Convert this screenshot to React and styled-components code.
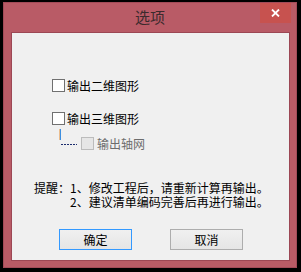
import styled, { createGlobalStyle } from "styled-components";

const GlobalStyle = createGlobalStyle`
  html, body {
    margin: 0;
    padding: 0;
    background: #000;
  }
  body {
    font-family: "Noto Sans CJK SC", "Liberation Sans", sans-serif;
  }
`;

const Screen = styled.div`
  width: 301px;
  height: 272px;
  padding: 2px 0 0 3px;
  box-sizing: border-box;
`;

const Window = styled.div`
  width: 294px;
  height: 266px;
  box-sizing: border-box;
  display: flex;
  flex-direction: column;
  background: #b95b66;
  border: 1px solid #a34b58;
`;

const TitleBar = styled.div`
  height: 29px;
  display: grid;
  grid-template-columns: 1fr auto 1fr;
  align-items: center;
`;

const Title = styled.div`
  grid-column: 2;
  font-size: 15px;
  line-height: 15px;
  color: #3b2a2d;
  padding-bottom: 2px;
`;

const CloseButton = styled.button`
  grid-column: 3;
  justify-self: end;
  align-self: start;
  width: 31px;
  height: 20px;
  margin: 0 5px 0 0;
  padding: 0;
  border: none;
  background: #c7524f;
  display: flex;
  align-items: center;
  justify-content: center;
`;

const Client = styled.div`
  flex: 1;
  margin: 0 6px 6px 7px;
  background: #f0f0f0;
  border: 1px solid #9c4754;
  font-size: 12px;
  line-height: 13px;
  color: #000;
  padding: 45px 0 0 40px;
  box-sizing: border-box;
`;

const CheckRow = styled.div`
  display: flex;
  align-items: center;
  gap: 2px;
  height: 14px;
  margin-bottom: ${(p) => p.$gap || 0}px;
`;

const Box = styled.span`
  width: 13px;
  height: 13px;
  box-sizing: border-box;
  border: 1px solid ${(p) => (p.$disabled ? "#bcbcbc" : "#707070")};
  background: ${(p) => (p.$disabled ? "#e6e6e6" : "#fff")};
  flex: none;
`;

const Label = styled.span`
  color: ${(p) => (p.$disabled ? "#6d6d6d" : "#000")};
  white-space: nowrap;
`;

const SubRow = styled.div`
  display: flex;
  align-items: flex-end;
  height: 22px;
  margin: 3px 0 0 7px;
  gap: 3px;
`;

const Connector = styled.svg`
  flex: none;
  margin-right: 1px;
  align-self: flex-start;
`;

const Notice = styled.div`
  display: grid;
  grid-template-columns: 36px auto;
  margin: 31px 0 0 -18px;
  line-height: 14px;
  white-space: nowrap;
`;

const ButtonRow = styled.div`
  display: flex;
  gap: 38px;
  margin: 20px 0 0 7px;
`;

const Button = styled.button`
  width: 73px;
  height: 21px;
  padding: 0;
  font-family: "Noto Sans CJK SC", sans-serif;
  font-size: 12px;
  line-height: 12px;
  color: #000;
  border: 1px solid ${(p) => (p.$primary ? "#3399ff" : "#adadad")};
  background: linear-gradient(#f0f0f0, #e5e5e5);
`;

export default function App() {
  return (
    <Screen>
      <GlobalStyle />
      <Window>
        <TitleBar>
          <Title>选项</Title>
          <CloseButton aria-label="关闭">
            <svg width="9" height="8" viewBox="0 0 9 8">
              <path d="M1 0.5 L8 7.5 M8 0.5 L1 7.5" stroke="#fff" strokeWidth="1.8" />
            </svg>
          </CloseButton>
        </TitleBar>
        <Client>
          <CheckRow $gap={19}>
            <Box />
            <Label>输出二维图形</Label>
          </CheckRow>
          <CheckRow>
            <Box />
            <Label>输出三维图形</Label>
          </CheckRow>
          <SubRow>
            <Connector width="18" height="22" viewBox="0 0 18 22">
              <line x1="1.5" y1="1" x2="1.5" y2="12" stroke="#3d8fe0" strokeWidth="1" />
              <line x1="0.5" y1="1" x2="0.5" y2="12" stroke="#e89a4a" strokeWidth="0.6" />
              <line x1="2" y1="16.5" x2="18" y2="16.5" stroke="#1c2d6e" strokeDasharray="2 1" />
            </Connector>
            <Box $disabled />
            <Label $disabled>输出轴网</Label>
          </SubRow>
          <Notice>
            <span>提醒：</span>
            <div>
              <div>1、修改工程后，请重新计算再输出。</div>
              <div>2、建议清单编码完善后再进行输出。</div>
            </div>
          </Notice>
          <ButtonRow>
            <Button $primary>确定</Button>
            <Button>取消</Button>
          </ButtonRow>
        </Client>
      </Window>
    </Screen>
  );
}
